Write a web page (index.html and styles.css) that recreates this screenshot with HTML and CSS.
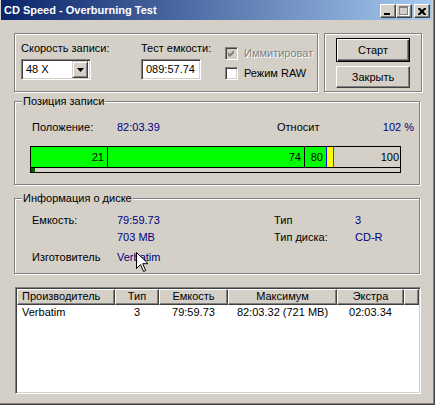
FILE: index.html
```html
<!DOCTYPE html>
<html>
<head>
<meta charset="utf-8">
<link rel="stylesheet" href="styles.css">
</head>
<body>
<div class="window">
  <div class="caption">
    <span class="title">CD Speed - Overburning Test</span>
    <div class="capbtns">
      <span class="cbtn min"><i class="minbar"></i></span>
      <span class="cbtn max"><i class="maxbox"></i></span>
      <span class="cbtn close"><svg width="8" height="7" viewBox="0 0 8 7"><path d="M0 0h2l2 2 2-2h2v1l-2.5 2.5 2.5 2.5v1h-2l-2-2-2 2h-2v-1l2.5-2.5-2.5-2.5z" fill="#000"/></svg></span>
    </div>
  </div>
  <div class="client">
    <div class="row1">
      <div class="group g1">
        <div class="field speed">
          <div class="lbl">Скорость записи:</div>
          <div class="combo"><span class="ctext">48 X</span><span class="drop"><svg width="7" height="4" viewBox="0 0 7 4"><path d="M0 0h7l-3.5 4z" fill="#000"/></svg></span></div>
        </div>
        <div class="field test">
          <div class="lbl">Тест емкости:</div>
          <div class="edit">089:57.74</div>
        </div>
        <div class="checks">
          <div class="chk disabled"><span class="box"><svg width="9" height="9" viewBox="0 0 9 9"><path d="M1 3l2 2 4-4v3l-4 4-2-2z" fill="#808080"/></svg></span><span class="chklabel">Иммитироват</span></div>
          <div class="chk"><span class="box"></span><span class="chklabel">Режим RAW</span></div>
        </div>
      </div>
      <div class="group g2">
        <div class="btn default">Старт</div>
        <div class="btn">Закрыть</div>
      </div>
    </div>

    <div class="group g3">
      <span class="legend">Позиция записи</span>
      <div class="posrow">
        <span class="plabel">Положение:</span>
        <span class="pval blue">82:03.39</span>
        <span class="plabel2">Относит</span>
        <span class="pval2 blue">102 %</span>
      </div>
      <div class="bar">
        <div class="segs">
          <div class="seg green" style="width:77px">21</div>
          <div class="seg green" style="width:197px">74</div>
          <div class="seg green blueedge" style="width:22px">80</div>
          <div class="seg yellow" style="width:7px"></div>
          <div class="seg rest">100</div>
        </div>
        <div class="strip"><i class="mark"></i></div>
      </div>
    </div>

    <div class="group g4">
      <span class="legend">Информация о диске</span>
      <div class="info">
        <span>Емкость:</span><span class="blue">79:59.73</span><span>Тип</span><span class="blue">3</span>
        <span></span><span class="blue">703 MB</span><span>Тип диска:</span><span class="blue">CD-R</span>
        <span>Изготовитель</span><span class="blue">Verbatim</span><span></span><span></span>
      </div>
    </div>

    <div class="list">
      <div class="lhead">
        <div class="hc left">Производитель</div>
        <div class="hc">Тип</div>
        <div class="hc">Емкость</div>
        <div class="hc">Максимум</div>
        <div class="hc">Экстра</div>
        <div class="hc"></div>
      </div>
      <div class="lrow">
        <div class="left">Verbatim</div>
        <div>3</div>
        <div>79:59.73</div>
        <div>82:03.32 (721 MB)</div>
        <div>02:03.34</div>
        <div></div>
      </div>
    </div>
  </div>
  <svg class="cursor" width="12" height="21" viewBox="0 0 12 21"><path d="M0.5 0.5v16l4-4 3 7 2.2-1-3-6.8h5.5z" fill="#fff" stroke="#000" stroke-width="1"/></svg>
</div>
</body>
</html>
```

FILE: styles.css
```css
* { box-sizing: border-box; }
html, body { margin: 0; padding: 0; }
body {
  background: #D4D0C8;
  font-family: "Liberation Sans", Arial, sans-serif;
  font-size: 11px;
  line-height: 13px;
  color: #000;
}
.window {
  position: relative;
  width: 435px;
  height: 405px;
  background: #D4D0C8;
  box-shadow: inset -1px -1px #404040, inset -2px -2px #808080;
  overflow: hidden;
}
.caption {
  display: flex;
  align-items: flex-start;
  height: 20px;
  margin: 0 3px 0 1px;
  background: linear-gradient(to right, #0A246A, #A6CAF0);
}
.title {
  flex: 1;
  color: #fff;
  font-weight: bold;
  font-size: 11px;
  line-height: 20px;
  padding-left: 3px;
  white-space: nowrap;
}
.capbtns { display: flex; margin-top: 4px; margin-right: 2px; }
.cbtn {
  position: relative;
  display: flex;
  align-items: center;
  justify-content: center;
  width: 16px;
  height: 14px;
  background: #D4D0C8;
  border: 1px solid;
  border-color: #fff #404040 #404040 #fff;
  box-shadow: inset -1px -1px #808080;
}
.cbtn.max { margin-right: 2px; }
.minbar {
  position: absolute;
  left: 3px;
  top: 8px;
  width: 6px;
  height: 2px;
  background: #000;
}
.maxbox {
  position: absolute;
  left: 2px;
  top: 1px;
  width: 9px;
  height: 9px;
  border: 1px solid #808080;
  border-top-width: 2px;
  box-shadow: 1px 1px #fff;
}
.client { padding: 13px 0 0 14px; }
.row1 { display: flex; }
.group {
  position: relative;
  border: 1px solid #808080;
  box-shadow: 1px 1px 0 #fff, inset 1px 1px 0 #fff;
}
.legend {
  position: absolute;
  top: -7px;
  left: 7px;
  padding: 0 1px;
  background: #D4D0C8;
  white-space: nowrap;
}
.g1 {
  display: flex;
  width: 304px;
  height: 59px;
  padding: 8px 0 0 6px;
}
.lbl { margin-bottom: 4px; white-space: nowrap; }
.speed { width: 70px; }
.test { width: 60px; margin-left: 50px; }
.combo, .edit, .box, .list {
  border: 1px solid;
  border-color: #808080 #fff #fff #808080;
  box-shadow: inset 1px 1px #404040, inset -1px -1px #D4D0C8;
  background: #fff;
}
.combo {
  display: flex;
  align-items: center;
  height: 21px;
  padding: 2px 2px 2px 4px;
}
.ctext { flex: 1; }
.drop {
  display: flex;
  align-items: center;
  justify-content: center;
  width: 16px;
  height: 17px;
  background: #D4D0C8;
  border: 1px solid;
  border-color: #D4D0C8 #404040 #404040 #D4D0C8;
  box-shadow: inset 1px 1px #fff, inset -1px -1px #808080;
}
.edit {
  height: 21px;
  padding: 3px 0 0 4px;
}
.checks {
  margin: 5px 0 0 24px;
  width: 88px;
}
.chk {
  display: flex;
  align-items: center;
  height: 13px;
  margin-bottom: 7px;
  white-space: nowrap;
}
.box {
  display: flex;
  flex: none;
  align-items: center;
  justify-content: center;
  width: 13px;
  height: 13px;
}
.chk.disabled .box { background: #D4D0C8; }
.chklabel { margin-left: 6px; }
.chk.disabled .chklabel {
  color: #808080;
  text-shadow: 1px 1px #fff;
}
.g2 {
  width: 98px;
  height: 59px;
  margin-left: 6px;
  padding: 4px 0 0 11px;
}
.btn {
  display: flex;
  align-items: center;
  justify-content: center;
  width: 74px;
  height: 22px;
  background: #D4D0C8;
  border: 1px solid;
  border-color: #fff #404040 #404040 #fff;
  box-shadow: inset -1px -1px #808080;
}
.btn.default {
  height: 24px;
  margin-bottom: 4px;
  border-color: #000;
  box-shadow: inset 1px 1px #fff, inset -1px -1px #404040, inset -2px -2px #808080;
}
.g3 {
  width: 406px;
  height: 84px;
  margin-top: 9px;
  padding: 19px 5px 0 0;
}
.posrow { display: flex; white-space: nowrap; }
.plabel { width: 85px; margin-left: 17px; }
.pval { width: 160px; }
.plabel2 { width: 43px; }
.pval2 { flex: 1; text-align: right; }
.blue { color: #000080; }
.bar {
  width: 371px;
  margin: 12px 0 0 15px;
  border: 1px solid #000;
  background: #D4D0C8;
}
.segs {
  display: flex;
  height: 21px;
  border-bottom: 1px solid #000;
}
.seg {
  display: flex;
  align-items: center;
  justify-content: flex-end;
  padding-right: 3px;
  border-right: 1px solid #000;
}
.green { background: #00FF00; }
.blueedge { border-right-color: #0000FF; }
.yellow { background: #FFFF00; border-right-color: #FF0000; padding: 0; }
.rest { flex: 1; border-right: 0; padding-right: 1px; }
.strip { position: relative; height: 4px; }
.mark {
  position: absolute;
  left: 0;
  top: 0;
  width: 4px;
  height: 4px;
  background: #006400;
}
.g4 {
  width: 406px;
  height: 76px;
  margin-top: 13px;
  padding: 15px 0 0 17px;
}
.info {
  display: grid;
  grid-template-columns: 85px 157px 81px auto;
  grid-template-rows: 17px 20px 13px;
  white-space: nowrap;
}
.list {
  width: 406px;
  height: 107px;
  margin: 13px 0 0 1px;
  padding: 1px;
}
.lhead, .lrow {
  display: grid;
  grid-template-columns: 98px 44px 69px 109px 67px 1fr;
  white-space: nowrap;
}
.hc {
  height: 16px;
  line-height: 13px;
  text-align: center;
  background: #D4D0C8;
  border: 1px solid;
  border-color: #fff #404040 #404040 #fff;
  box-shadow: inset -1px -1px #808080;
}
.hc.left { text-align: left; padding-left: 4px; }
.lrow { padding-top: 1px; }
.lrow > div { text-align: center; }
.lrow > .left { text-align: left; padding-left: 5px; }
.cursor {
  position: absolute;
  left: 136px;
  top: 252px;
}
```
